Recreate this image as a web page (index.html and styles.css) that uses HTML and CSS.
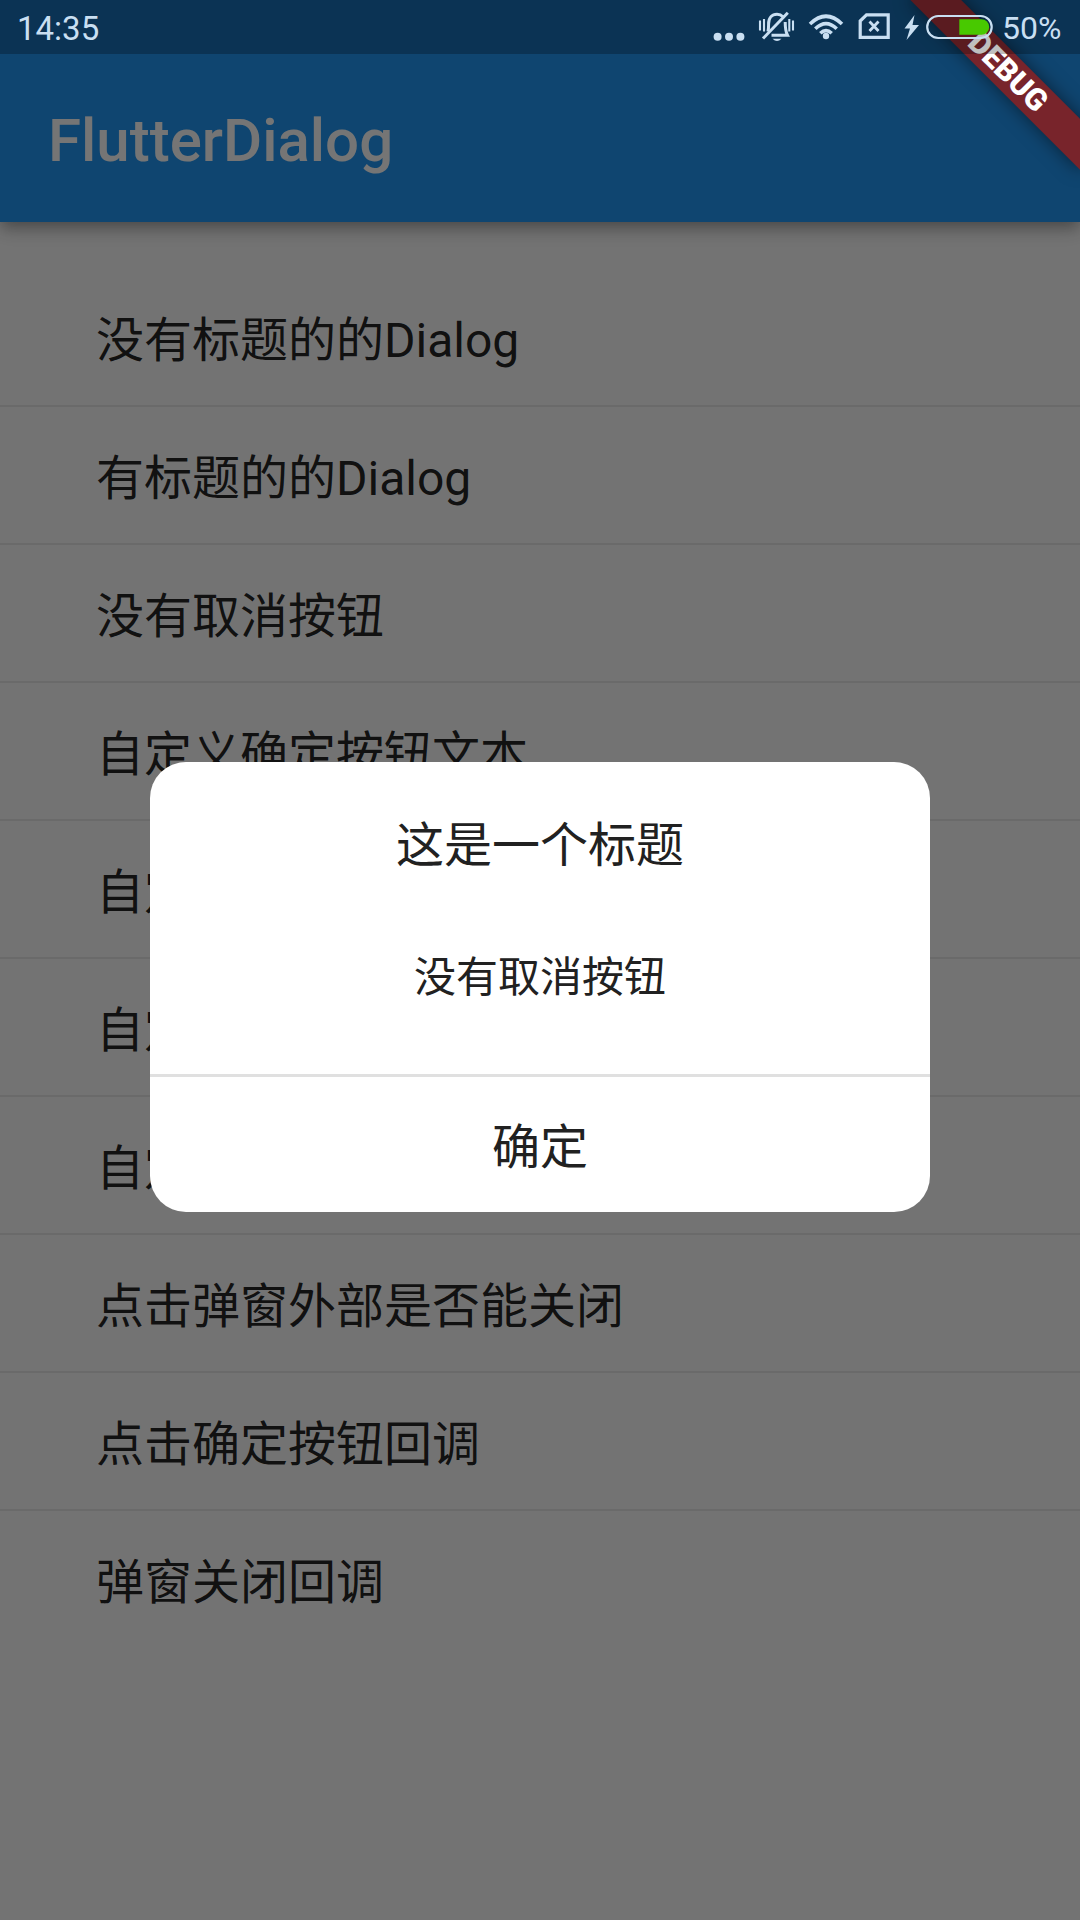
FILE: index.html
```html
<!DOCTYPE html>
<html lang="zh-CN">
<head>
<meta charset="utf-8">
<title>FlutterDialog</title>
<link rel="stylesheet" href="styles.css">
</head>
<body>
<div class="screen">
  <header class="app-bar"><h1 class="app-title">FlutterDialog</h1></header>
  <ul class="menu">
    <li class="menu-item">没有标题的的Dialog</li>
    <li class="menu-item">有标题的的Dialog</li>
    <li class="menu-item">没有取消按钮</li>
    <li class="menu-item">自定义确定按钮文本</li>
    <li class="menu-item">自定</li>
    <li class="menu-item">自定</li>
    <li class="menu-item">自定</li>
    <li class="menu-item">点击弹窗外部是否能关闭</li>
    <li class="menu-item">点击确定按钮回调</li>
    <li class="menu-item">弹窗关闭回调</li>
  </ul>

  <div class="scrim">
    <section class="dialog">
      <h2 class="dialog-title">这是一个标题</h2>
      <p class="dialog-text">没有取消按钮</p>
      <button class="dialog-button">确定</button>
    </section>
  </div>

  <div class="banner">DEBUG</div>

  <div class="status-bar">
    <span class="clock">14:35</span>
    <svg class="status-icons" width="300" height="54" viewBox="700 0 300 54">
      <g fill="#c9dff2">
        <circle cx="717.6" cy="36.8" r="4"/><circle cx="729" cy="36.8" r="4"/><circle cx="740.4" cy="36.8" r="4"/>
      </g>
      <g fill="none" stroke="#c9dff2" stroke-width="3">
        <path d="M768 31.500C768.600 29 768.600 27 768.600 24C768.600 17.500 772 14.300 777 14.300C779.500 14.300 781.500 15.200 783 16.700M785.200 22C785.200 28 785.500 31.500 787.500 35.300H771.500"/>
        <path d="M763 38.500L787.800 12.700"/>
        <path d="M760 20.500V30.500M764 19V31.500M793 20.500V30.500M789.300 19V31.500" stroke-width="2.100"/>
      </g>
      <path d="M772.500 38.700H781.500Q777 43.300 772.500 38.700Z" fill="#c9dff2"/>
      <g fill="none" stroke="#c9dff2" stroke-width="3.600">
        <path d="M810 24Q826 8.500 842 24"/>
        <path d="M815.300 28.800Q826 18.500 836.700 28.800"/>
        <path d="M820.300 33.300Q826 28 831.700 33.300"/>
      </g>
      <circle cx="826" cy="36" r="3.200" fill="#c9dff2"/>
      <path d="M866.500 14.800H888.200V37.400H860.200V21Z" fill="none" stroke="#c9dff2" stroke-width="3.200"/>
      <path d="M869.500 21.500L878.500 31M878.500 21.500L869.500 31" stroke="#c9dff2" stroke-width="2.800"/>
      <path d="M914.500 15L904.500 28.500H910L906.500 40L919 25H912.500Z" fill="#c9dff2"/>
      <rect x="927.200" y="16" width="64.500" height="22" rx="11" fill="none" stroke="#c9dff2" stroke-width="2.200"/>
      <path d="M959.300 19.300H981.500A7.700 7.700 0 0 1 981.500 34.700H959.300Z" fill="#48c900"/>
    </svg>
    <span class="battery-level">50%</span>
  </div>
</div>
</body>
</html>
```
FILE: styles.css
```css
* { box-sizing: border-box; }

body {
  margin: 0;
  font-family: Roboto, "Noto Sans CJK SC", sans-serif;
}

.screen {
  position: relative;
  width: 1080px;
  height: 1920px;
  overflow: hidden;
  background: #fafafa;
  color: rgba(0, 0, 0, 0.87);
}

.app-bar {
  position: relative;
  display: flex;
  align-items: center;
  height: 222px;
  padding: 59px 48px 0;
  background: #2196f3;
  box-shadow: 0 6px 12px -3px rgba(0, 0, 0, 0.2),
              0 9px 15px 0 rgba(0, 0, 0, 0.14),
              0 3px 24px 0 rgba(0, 0, 0, 0.1);
}

.app-title {
  margin: 0;
  font-size: 60px;
  font-weight: 500;
  line-height: 1.2;
  color: #fff;
}

.menu {
  margin: 0;
  padding: 47px 0 0;
  list-style: none;
}

.menu-item {
  display: flex;
  align-items: center;
  height: 138px;
  padding: 8px 96px 0;
  border-bottom: 2px solid rgba(0, 0, 0, 0.07);
  font-size: 48px;
  line-height: 72px;
  white-space: nowrap;
}

.menu-item:last-child { border-bottom-color: transparent; }

.scrim {
  position: absolute;
  inset: 0;
  display: flex;
  align-items: center;
  justify-content: center;
  padding-top: 54px;
  background: rgba(0, 0, 0, 0.54);
}

.dialog {
  display: flex;
  flex-direction: column;
  width: 780px;
  height: 450px;
  border-radius: 36px;
  background: #fff;
  color: #212121;
  text-align: center;
}

.dialog-title {
  margin: 49px 0 0;
  font-size: 48px;
  font-weight: 400;
  line-height: 70px;
}

.dialog-text {
  flex: 1;
  margin: 66px 0 0;
  font-size: 42px;
  line-height: 62px;
}

.dialog-button {
  height: 138px;
  padding: 0 0 3px;
  border: 0;
  border-top: 3px solid #e0e0e0;
  background: none;
  color: inherit;
  font: inherit;
  font-size: 48px;
}

.banner {
  position: absolute;
  top: 84px;
  left: 960px;
  width: 240px;
  height: 36px;
  transform: rotate(45deg);
  transform-origin: 120px -84px;
  background: #78242b;
  box-shadow: 0 0 18px rgba(0, 0, 0, 0.5);
  color: #fff;
  font-size: 30.6px;
  font-weight: 900;
  line-height: 36px;
  text-align: center;
}

.status-bar {
  position: absolute;
  inset: 0 0 auto;
  display: flex;
  align-items: center;
  height: 54px;
  padding: 2px 18px 0 17px;
  background: rgba(0, 0, 0, 0.25);
  color: #c9dff2;
  font-size: 33px;
}

.status-icons {
  margin: -2px 0 0 auto;
}

.battery-level {
  width: 62px;
  padding-left: 2px;
  font-size: 32px;
}
```
